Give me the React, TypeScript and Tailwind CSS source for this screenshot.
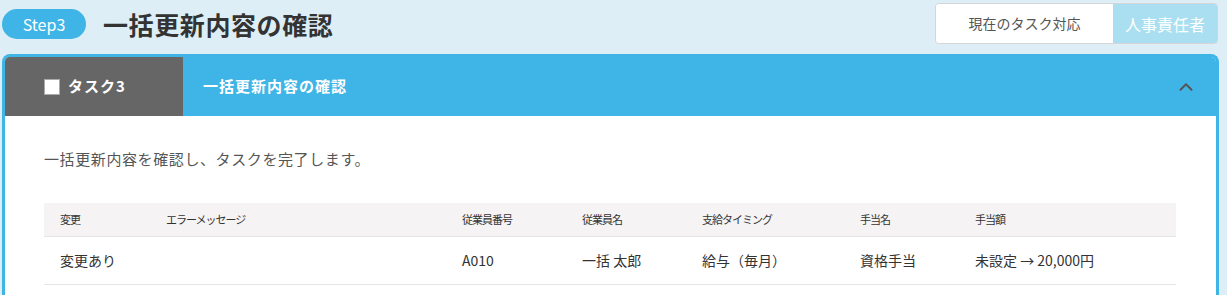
import { ChevronUp } from "lucide-react";

const font = { fontFamily: '"Noto Sans CJK JP", "Noto Sans", sans-serif' };

export default function App() {
  const cols = [
    { label: "変更", w: "w-[106px]" },
    { label: "エラーメッセージ", w: "w-[296px]" },
    { label: "従業員番号", w: "w-[120px]" },
    { label: "従業員名", w: "w-[120px]" },
    { label: "支給タイミング", w: "w-[158px]" },
    { label: "手当名", w: "w-[115px]" },
    { label: "手当額", w: "flex-1" },
  ];
  const row = ["変更あり", "", "A010", "一括 太郎", "給与（毎月）", "資格手当", "未設定 → 20,000円"];

  return (
    <div className="w-[1227px] h-[295px] overflow-hidden bg-[#ddeef6]" style={font}>
      {/* 上部: ステップ見出し */}
      <div className="flex items-start justify-between pl-[2px] pr-[9px] pt-[3px]">
        <div className="flex items-center gap-[17px] pt-[6px]">
          <span className="flex h-[30px] w-[84px] items-center justify-center rounded-full bg-[#3eb5e6] text-[16px] text-white">
            Step3
          </span>
          <h1 className="text-[25px] font-bold leading-none text-[#333] tracking-[0.6px]">一括更新内容の確認</h1>
        </div>
        <div className="flex h-[41px] overflow-hidden rounded-[4px] border border-[#d5d5d5]">
          <div className="flex w-[177px] items-center justify-center bg-white text-[14px] text-[#555]">
            現在のタスク対応
          </div>
          <div className="flex w-[104px] items-center justify-center bg-[#a9dff0] text-[16px] text-white">
            人事責任者
          </div>
        </div>
      </div>

      {/* タスクカード */}
      <div className="mx-[2px] mt-[10px] w-[1217px] overflow-hidden rounded-t-[8px] border-[3px] border-b-0 border-[#3eb5e6] bg-white">
        <div className="flex h-[59px] bg-[#3eb5e6]">
          <div className="flex w-[178px] items-center bg-[#666] pl-[39px]">
            <span className="mr-[8px] h-[16px] w-[16px] border border-[#aaa] bg-white" />
            <span className="text-[15px] font-bold tracking-[1px] text-white">タスク3</span>
          </div>
          <div className="flex flex-1 items-center pl-[20px] text-[15px] font-bold tracking-[1px] text-white">
            一括更新内容の確認
          </div>
          <div className="flex items-center pr-[19px]">
            <ChevronUp className="h-[22px] w-[22px] text-[#555]" strokeWidth={2.2} />
          </div>
        </div>

        <div className="px-[39px] pb-[40px] pt-[32px]">
          <p className="text-[15px] leading-[22px] tracking-[0.6px] text-[#555]">一括更新内容を確認し、タスクを完了します。</p>

          <div className="mt-[33px] w-[1132px]">
            <div className="flex h-[34px] items-center border-b border-[#e6e6e6] bg-[#f5f3f3] text-[11px] tracking-[-1px] text-[#333]">
              {cols.map((c) => (
                <div key={c.label} className={`${c.w} pl-[16px]`}>
                  {c.label}
                </div>
              ))}
            </div>
            <div className="flex h-[48px] items-center border-b border-[#e6e6e6] text-[14px] text-[#333]">
              {cols.map((c, i) => (
                <div key={c.label} className={`${c.w} pl-[16px]`}>
                  {row[i]}
                </div>
              ))}
            </div>
          </div>
        </div>
      </div>
    </div>
  );
}
